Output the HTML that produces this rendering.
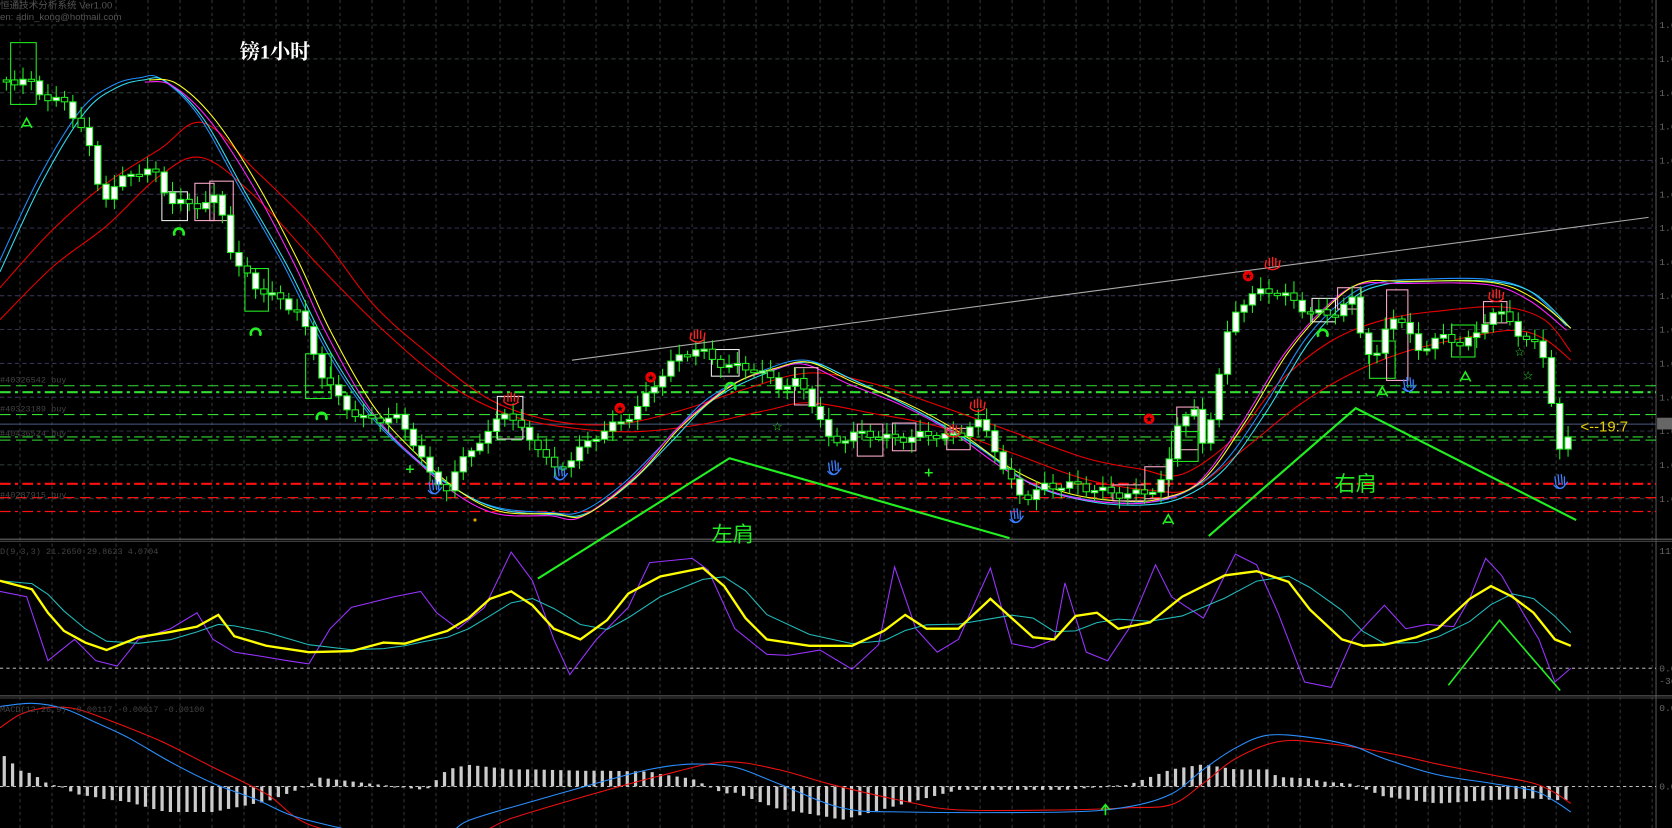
<!DOCTYPE html>
<html><head><meta charset="utf-8">
<style>
html,body{margin:0;padding:0;background:#000;overflow:hidden}
svg{display:block}
</style></head>
<body>
<svg id="s" width="1672" height="828" viewBox="0 0 1570 777" preserveAspectRatio="none" xmlns="http://www.w3.org/2000/svg">
<rect width="1570" height="777" fill="#000"/>
<g id="grid"></g>
<g id="hl"></g>
<g id="ma"></g>
<g id="boxes" fill="none" stroke-width="1"></g>
<g id="candles"></g>
<g id="ind"></g>
<g id="anno"></g>
<text x="0" y="8" fill="#555" font-family="Liberation Sans, Noto Sans CJK SC, sans-serif" font-size="9">恒通技术分析系统 Ver1.00</text>
<text x="0" y="19" fill="#555" font-family="Liberation Sans, sans-serif" font-size="9">en: adin_kong@hotmail.com</text>
<text x="225" y="55" fill="#fff" font-family="Liberation Serif, Noto Serif CJK SC, serif" font-size="19" font-weight="bold">镑1小时</text>
<text x="668" y="508" fill="#22ee22" font-family="Liberation Sans, Noto Sans CJK SC, sans-serif" font-size="20">左肩</text>
<text x="1253" y="461" fill="#22ee22" font-family="Liberation Sans, Noto Sans CJK SC, sans-serif" font-size="20">右肩</text>
<text x="1484" y="405" fill="#e8d000" font-family="Liberation Sans, sans-serif" font-size="14">&lt;--19:7</text>
<g font-family="Liberation Mono, monospace" font-size="8" fill="#444">
<text x="0" y="359">#40326542 buy</text>
<text x="0" y="386">#40323189 buy</text>
<text x="0" y="409">#40436524 buy</text>
<text x="0" y="467">#40287915 buy</text>
<text x="0" y="520">D(9,3,3) 21.2650 29.8623 4.0704</text>
<text x="0" y="668">MACD(12,26,9) -0.00117 -0.00017 -0.00100</text>
</g>
<g id="axis" font-family="Liberation Mono, monospace" font-size="9" fill="#666"></g>
</svg>
<script>
const NS="http://www.w3.org/2000/svg";
function el(parent,tag,attrs){const e=document.createElementNS(NS,tag);for(const k in attrs)e.setAttribute(k,attrs[k]);document.getElementById(parent).appendChild(e);return e;}
function interp(pts,x){if(x<=pts[0][0])return pts[0][1];for(let i=1;i<pts.length;i++){if(x<=pts[i][0]){const a=pts[i-1],b=pts[i];return a[1]+(b[1]-a[1])*(x-a[0])/(b[0]-a[0]);}}return pts[pts.length-1][1];}
function smooth(pts){let d="M"+pts[0][0]+","+pts[0][1];for(let i=0;i<pts.length-1;i++){const p0=pts[i-1]||pts[i],p1=pts[i],p2=pts[i+1],p3=pts[i+2]||p2;const c1=[p1[0]+(p2[0]-p0[0])/6,p1[1]+(p2[1]-p0[1])/6],c2=[p2[0]-(p3[0]-p1[0])/6,p2[1]-(p3[1]-p1[1])/6];d+=" C"+c1[0].toFixed(1)+","+c1[1].toFixed(1)+" "+c2[0].toFixed(1)+","+c2[1].toFixed(1)+" "+p2[0]+","+p2[1];}return d;}
function poly(pts){return "M"+pts.map(p=>p[0]+","+p[1]).join(" L");}
// grid
for(let x=18.8;x<1555;x+=30.05){el("grid","line",{x1:x,y1:0,x2:x,y2:777,stroke:"#3a3a3a","stroke-width":0.9,"stroke-dasharray":"3,3"});}
for(let i=0;i<15;i++){const y=23.5+i*31.75;if(y>505)break;const c=(y>150&&y<420)?"#3a3a5a":"#33403a";el("grid","line",{x1:0,y1:y,x2:1555,y2:y,stroke:c,"stroke-width":0.9,"stroke-dasharray":"4,3"});}
el("grid","line",{x1:1555,y1:0,x2:1555,y2:777,stroke:"#555","stroke-width":1});
el("grid","line",{x1:0,y1:506,x2:1570,y2:506,stroke:"#666","stroke-width":1});
el("grid","line",{x1:0,y1:508,x2:1570,y2:508,stroke:"#444","stroke-width":1});
el("grid","line",{x1:0,y1:653,x2:1570,y2:653,stroke:"#666","stroke-width":1});
el("grid","line",{x1:0,y1:655,x2:1570,y2:655,stroke:"#444","stroke-width":1});
el("grid","line",{x1:0,y1:627,x2:1555,y2:627,stroke:"#ddd","stroke-width":0.8,"stroke-dasharray":"3,3"});
el("grid","line",{x1:0,y1:738,x2:1555,y2:738,stroke:"#ddd","stroke-width":0.8,"stroke-dasharray":"3,3"});
// axis labels
const ax=document.getElementById("axis");
for(let i=0;i<15;i++){const y=23.5+i*31.75;if(y>505)break;el("axis","text",{x:1558,y:y+3}).textContent="1.6";}
el("axis","text",{x:1558,y:520}).textContent="117";
el("axis","text",{x:1558,y:630}).textContent="0.0";
el("axis","text",{x:1558,y:642}).textContent="-36";
el("axis","text",{x:1558,y:667}).textContent="0.0";
el("axis","text",{x:1558,y:741}).textContent="0.0";
el("hl","rect",{x:1556,y:392,width:14,height:11,fill:"#666"});
// horizontal price lines
const G="#33dd33";
el("hl","line",{x1:0,y1:362,x2:1555,y2:362,stroke:G,"stroke-width":1,"stroke-dasharray":"10,5"});
el("hl","line",{x1:0,y1:368,x2:1555,y2:368,stroke:G,"stroke-width":2,"stroke-dasharray":"10,4,3,4"});
el("hl","line",{x1:0,y1:389,x2:1555,y2:389,stroke:G,"stroke-width":1,"stroke-dasharray":"10,5"});
el("hl","line",{x1:0,y1:398,x2:1555,y2:398,stroke:"#4a5a80","stroke-width":1});
el("hl","line",{x1:0,y1:410,x2:1555,y2:410,stroke:G,"stroke-width":1,"stroke-dasharray":"10,4,3,4"});
el("hl","line",{x1:0,y1:413,x2:1555,y2:413,stroke:G,"stroke-width":1,"stroke-dasharray":"10,5"});
el("hl","line",{x1:0,y1:454,x2:1555,y2:454,stroke:"#ff1010","stroke-width":2,"stroke-dasharray":"10,4,3,4"});
el("hl","line",{x1:0,y1:467,x2:1555,y2:467,stroke:"#ff1010","stroke-width":1.2,"stroke-dasharray":"10,5"});
el("hl","line",{x1:0,y1:480,x2:1555,y2:480,stroke:"#ff1010","stroke-width":1.2,"stroke-dasharray":"10,4,3,4"});
// trend line
el("hl","line",{x1:537,y1:338,x2:1548,y2:204,stroke:"#aaa","stroke-width":1});
// MAs
const red1=[[0,270],[50,215],[100,172],[150,140],[190,115],[240,160],[300,220],[350,285],[400,330],[460,375],[520,395],[580,398],[640,385],[700,365],[760,350],[820,360],[880,380],[950,405],[1020,430],[1070,440],[1110,445],[1160,410],[1200,360],[1250,320],[1300,300],[1350,292],[1410,288],[1450,300],[1475,330]];
const red2=[[0,300],[50,250],[100,212],[150,165],[190,148],[240,185],[300,250],[360,310],[420,360],[480,390],[540,402],[600,405],[660,398],[720,385],[760,378],[820,388],[880,400],[950,425],[1020,450],[1080,460],[1120,458],[1170,420],[1220,380],[1270,350],[1320,330],[1370,318],[1420,310],[1450,318],[1475,338]];
const cyan=[[0,255],[40,170],[80,105],[110,82],[135,75],[155,76],[190,110],[230,180],[270,250],[310,330],[350,390],[390,430],[430,460],[470,478],[520,483],[550,482],[590,455],[630,415],[670,375],[720,350],[760,340],[800,356],[860,385],[920,420],[970,455],[1020,470],[1070,474],[1110,467],[1150,440],[1190,385],[1230,320],[1270,280],[1300,267],[1340,264],[1400,264],[1440,275],[1475,308]];
const blue=cyan.map(p=>[p[0]-4,p[1]-2]);
const yel=[[140,75],[165,78],[200,110],[240,170],[280,245],[310,310],[350,380],[390,425],[430,460],[470,480],[520,482],[550,483],[600,445],[640,400],[690,360],[730,345],[760,340],[800,358],[850,378],[900,405],[950,440],[1000,462],[1050,470],[1090,468],[1130,450],[1170,395],[1210,330],[1250,285],[1280,265],[1320,264],[1400,265],[1440,280],[1475,308]];
const mag=yel.map(p=>[p[0]-4,p[1]+2]);
el("ma","path",{d:smooth(red1),stroke:"#e00",fill:"none","stroke-width":1});
el("ma","path",{d:smooth(red2),stroke:"#e00",fill:"none","stroke-width":1});
el("ma","path",{d:smooth(blue),stroke:"#1e90ff",fill:"none","stroke-width":1});
el("ma","path",{d:smooth(cyan),stroke:"#33ddee",fill:"none","stroke-width":1});
el("ma","path",{d:smooth(mag),stroke:"#ff22ff",fill:"none","stroke-width":1});
el("ma","path",{d:smooth(yel),stroke:"#ffff22",fill:"none","stroke-width":1});
// price
const price=[[8,75],[25,72],[40,88],[60,100],[80,125],[95,185],[110,170],[125,160],[145,165],[160,190],[180,190],[205,185],[220,250],[240,270],[265,280],[280,290],[300,350],[320,380],[345,392],[370,390],[390,420],[405,450],[420,455],[440,420],[460,410],[472,385],[490,405],[505,415],[520,440],[540,430],[560,410],[580,395],[600,380],[620,355],[640,335],[655,325],[670,335],[690,345],[710,350],[730,362],[750,355],[765,380],[780,420],[800,410],[820,405],[840,410],[860,412],[880,410],[900,408],[915,390],[930,410],[945,450],[960,470],[980,455],[1000,452],[1020,460],[1040,465],[1060,462],[1080,458],[1095,450],[1105,400],[1120,385],[1130,420],[1140,375],[1150,320],[1162,285],[1172,280],[1190,275],[1210,280],[1230,290],[1250,295],[1270,285],[1282,330],[1295,335],[1305,290],[1318,300],[1330,330],[1350,320],[1370,322],[1385,315],[1400,288],[1415,300],[1430,320],[1448,330],[1458,380],[1466,430],[1474,405]];
let prev=interp(price,0);
for(let i=0,x=6;x<1478;i++,x+=7.8){
 let c=interp(price,x)+Math.sin(i*1.7)*4+Math.sin(i*0.61)*3;
 const o=prev; prev=c;
 const top=Math.min(o,c), bot=Math.max(o,c);
 const hi=top-3-Math.abs(Math.sin(i*2.3))*8, lo=bot+3+Math.abs(Math.cos(i*1.9))*7;
 el("candles","line",{x1:x,y1:hi,x2:x,y2:lo,stroke:"#22ee22","stroke-width":1});
 const h=Math.max(bot-top,2);
 el("candles","rect",{x:x-3,y:top,width:6,height:h,fill:(c<o||h>10)?"#fff":"#000",stroke:"#22ee22","stroke-width":1});
}
// boxes
const bx=[[10,40,24,58,"#22ee22"],[152,180,24,27,"#eee"],[183,172,18,35,"#ffaacc"],[197,170,22,37,"#ffaacc"],[230,252,22,40,"#22ee22"],[287,332,24,42,"#22ee22"],[467,372,24,40,"#eee"],[668,328,26,25,"#eee"],[746,345,22,35,"#ffaacc"],[805,398,24,30,"#ffaacc"],[838,397,22,26,"#ffaacc"],[889,402,22,20,"#ffaacc"],[1045,455,30,15,"#ffaacc"],[1075,438,22,30,"#ffaacc"],[1105,382,20,40,"#ffaacc"],[1100,405,25,28,"#22ee22"],[1200,380,2,2,"#000"],[1232,280,22,22,"#eee"],[1256,270,22,20,"#ffaacc"],[1286,320,24,35,"#22ee22"],[1302,272,20,85,"#ffaacc"],[1363,305,22,30,"#22ee22"],[1393,283,22,20,"#ffaacc"]];
bx.forEach(b=>el("boxes","rect",{x:b[0],y:b[1],width:b[2],height:b[3],stroke:b[4]}));
// markers
function hand(x,y){el("anno","path",{d:`M${x-5},${y-8} L${x-4},${y} M${x-2},${y-10} L${x-1},${y} M${x+1},${y-10} L${x+2},${y} M${x+4},${y-8} L${x+4},${y} M${x-6},${y} Q${x},${y+8} ${x+7},${y-3} M${x-4},${y} Q${x},${y+6} ${x+4},${y+1}`,stroke:"#3a7fff",fill:"none","stroke-width":1.2});}
[[408,460],[526,447],[783,442],[954,487],[1323,364],[1465,455]].forEach(p=>hand(p[0],p[1]));
function flower(x,y){el("anno","path",{d:`M${x-7},${y} L${x-6},${y-6} M${x-3},${y} L${x-3},${y-8} M${x},${y} L${x},${y-9} M${x+3},${y} L${x+3},${y-8} M${x+6},${y} L${x+7},${y-6} M${x-7},${y} Q${x},${y+6} ${x+7},${y}`,stroke:"#ff2020",fill:"none","stroke-width":1.3});}
[[655,318],[480,377],[918,383],[1195,250],[1405,280],[895,407]].forEach(p=>flower(p[0],p[1]));
function rstar(x,y){el("anno","circle",{cx:x,cy:y,r:5,fill:"#e00"});el("anno","text",{x:x-3.5,y:y+3,fill:"#000","font-size":8,"font-family":"DejaVu Sans, sans-serif"}).textContent="★";}
[[611,354],[582,383],[1172,259],[1079,393]].forEach(p=>rstar(p[0],p[1]));
function gA(x,y){el("anno","path",{d:`M${x-5},${y+4} L${x},${y-5} L${x+5},${y+4} M${x-3},${y+2} L${x+3},${y+2}`,stroke:"#22ee22",fill:"none","stroke-width":1.5});}
[[25,116],[1097,488],[1298,368],[1376,354]].forEach(p=>gA(p[0],p[1]));
function gC(x,y){el("anno","path",{d:`M${x-4},${y+3} A4.5,4.5 0 1 1 ${x+4},${y+3}`,stroke:"#22ee22",fill:"none","stroke-width":2.5});}
[[168,218],[240,312],[302,391],[686,363],[1242,313]].forEach(p=>gC(p[0],p[1]));
[[730,400],[1435,352],[1427,330]].forEach(p=>{el("anno","text",{x:p[0]-5,y:p[1]+4,fill:"#22ee22","font-size":11,"font-family":"DejaVu Sans, sans-serif"}).textContent="☆";});
[[385,440],[872,443]].forEach(p=>{el("anno","text",{x:p[0]-5,y:p[1]+4,fill:"#22ee22","font-size":12,"font-weight":"bold","font-family":"DejaVu Sans, sans-serif"}).textContent="+";});
el("anno","circle",{cx:446,cy:488,r:1.5,fill:"#e0a000"});
// shoulders
el("anno","path",{d:"M505,543 L685,430 L948,505",stroke:"#22ee22",fill:"none","stroke-width":2});
el("anno","path",{d:"M1135,503 L1273,383 L1480,488",stroke:"#22ee22",fill:"none","stroke-width":2});
el("anno","path",{d:"M1360,643 L1408,582 L1465,648",stroke:"#22ee22",fill:"none","stroke-width":1.5});
// stochastic
const sy=[[0,545],[30,553],[45,575],[60,592],[80,603],[100,610],[130,598],[160,593],[185,588],[205,577],[220,597],[250,606],[290,612],[330,611],[360,603],[380,604],[400,598],[420,592],[440,580],[460,562],[480,555],[500,568],[520,590],[545,600],[570,582],[590,557],[620,541],[660,533],[680,550],[700,580],[720,600],[760,606],[800,606],[830,592],[850,577],[870,590],[900,590],[930,562],[950,580],[970,598],[990,600],[1010,578],[1030,575],[1050,590],[1080,584],[1110,560],[1150,540],[1180,536],[1210,546],[1230,572],[1260,600],[1280,606],[1300,605],[1330,598],[1350,590],[1380,562],[1400,550],[1420,560],[1440,575],[1460,600],[1475,606]];
const sc=sy.map((p,i)=>{const a=sy[Math.max(0,i-2)],b=sy[Math.max(0,i-1)];return [p[0],((a[1]+b[1]+p[1])/3).toFixed(1)*1];});
const sp=[[0,555],[25,560],[45,620],[70,600],[90,620],[110,625],[130,600],[160,590],[185,575],[200,600],[220,612],[240,615],[270,620],[290,623],[310,590],[330,570],[350,565],[370,560],[395,555],[410,575],[430,590],[455,570],[480,518],[500,545],[520,600],[535,633],[560,600],[590,570],[610,528],[650,524],[665,535],[690,590],[720,614],[740,615],[770,610],[800,628],[825,605],[840,532],[860,590],[880,612],[900,600],[930,533],[950,604],[970,608],[990,600],[1000,547],[1020,612],[1040,620],[1060,590],[1085,530],[1100,560],[1130,580],[1160,520],[1180,530],[1200,575],[1225,640],[1250,645],[1270,600],[1300,568],[1320,590],[1340,586],[1365,588],[1380,562],[1395,524],[1410,540],[1430,575],[1445,600],[1460,640],[1475,627]];
el("ind","path",{d:poly(sp),stroke:"#9933ff",fill:"none","stroke-width":1});
el("ind","path",{d:poly(sc),stroke:"#22bbbb",fill:"none","stroke-width":1});
el("ind","path",{d:poly(sy),stroke:"#ffff00",fill:"none","stroke-width":2.2});
// macd
const mr=[[0,683],[20,670],[45,664],[70,665],[100,675],[150,695],[200,720],[250,745],[300,777],[420,790],[480,768],[550,747],[620,728],[680,715],[730,722],[780,736],[850,752],[900,760],[1000,760],[1060,758],[1100,755],[1130,735],[1160,712],[1200,696],[1240,697],[1300,706],[1350,717],[1400,727],[1440,735],[1460,744],[1475,754]];
const mb=[[0,663],[30,660],[60,665],[90,678],[120,692],[160,715],[200,735],[240,750],[290,770],[400,790],[440,770],[500,752],[560,735],[610,722],[650,717],[690,720],[730,735],[790,758],[850,762],[1000,762],[1060,757],[1100,745],[1130,722],[1160,702],[1190,690],[1230,692],[1270,700],[1300,712],[1350,727],[1400,735],[1440,742],[1460,752],[1475,762]];
for(let x=4;x<1478;x+=7.8){
 let h=(interp(mr,x)-interp(mb,x))*1.6;
 if(Math.abs(h)<1)h=h<0?-1:1;
 const y=h>0?738-h:738;
 el("ind","rect",{x:x-1.5,y:y,width:3,height:Math.abs(h),fill:"#ccc"});
}
el("ind","path",{d:smooth(mr),stroke:"#ee1111",fill:"none","stroke-width":1});
el("ind","path",{d:smooth(mb),stroke:"#2a8fff",fill:"none","stroke-width":1});
el("ind","path",{d:"M1038,765 L1038,756 M1034,760 L1038,755 L1042,760",stroke:"#22ee22",fill:"none","stroke-width":1.5});
</script>
</body></html>
